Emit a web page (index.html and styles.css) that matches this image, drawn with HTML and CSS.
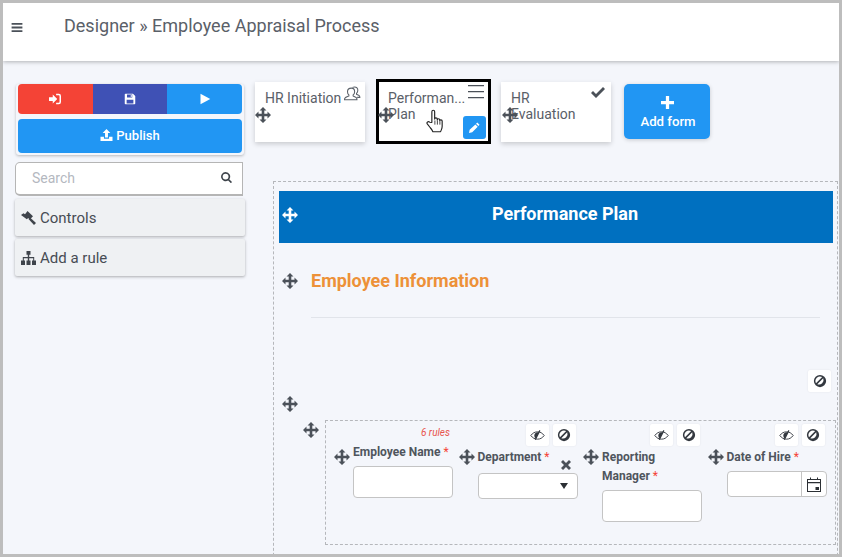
FILE: index.html
```html
<!DOCTYPE html>
<html lang="en">
<head>
<meta charset="utf-8">
<title>Designer</title>
<link rel="stylesheet" href="styles.css">
</head>
<body>
<svg class="sprite" aria-hidden="true">
  <symbol id="move" viewBox="0 0 16 16"><path d="M8 0l3.500 3.500H9.300v3.200h3.200V4.500L16 8l-3.500 3.500V9.300H9.300v3.200h2.200L8 16l-3.500-3.500h2.200V9.300H3.500v2.200L0 8l3.500-3.500v2.200h3.200V3.500H4.500z"/></symbol>
  <symbol id="ban" viewBox="0 0 16 16"><path fill-rule="evenodd" d="M8 1a7 7 0 1 1 0 14A7 7 0 0 1 8 1zm3.700 3.900L4.900 11.700A5.300 5.300 0 0 0 11.700 4.900zM10.500 3.400A5.300 5.300 0 0 0 3.400 10.500z"/></symbol>
  <symbol id="eye" viewBox="0 0 16 12"><path fill="none" stroke="#33383f" stroke-width="1" d="M.7 6C2.700 3.300 5 2 8 2s5.300 1.300 7.300 4C13.300 8.700 11 10 8 10S2.700 8.700.7 6z"/><path d="M4.500 6a3.500 3.500 0 0 1 5-3.200L6.200 9.300A3.500 3.500 0 0 1 4.500 6z"/><path d="M10 0l1.200.7-5 10.300-1.200-.7z"/></symbol>
</svg>
<div class="frame">
  <header class="topbar">
    <svg class="burger" viewBox="0 0 12 10"><path d="M0 0h12v2H0zM0 4h12v2H0zM0 8h12v2H0z"/></svg>
    <h1 class="title">Designer » Employee Appraisal Process</h1>
  </header>
  <div class="workspace">
    <aside class="sidebar">
      <div class="actions">
        <div class="action-row">
          <button class="action red"><svg class="ico" viewBox="0 0 16 16"><path d="M0 5.500h5V2l6 6-6 6v-3.500H0z"/><path d="M9.500 1H13a3 3 0 0 1 3 3v8a3 3 0 0 1-3 3H9.500v-2H13a1 1 0 0 0 1-1V4a1 1 0 0 0-1-1H9.500z"/></svg></button>
          <button class="action indigo"><svg class="ico" viewBox="0 0 16 16"><path fill-rule="evenodd" d="M1 2a1 1 0 0 1 1-1h10l3 3v10a1 1 0 0 1-1 1H2a1 1 0 0 1-1-1zm3 0v4h7V2zm5 .7h1.300v2.600H9zM3.500 9v5h9V9z"/></svg></button>
          <button class="action blue"><svg class="ico" viewBox="0 0 16 16"><path d="M2 1l13 7-13 7z"/></svg></button>
        </div>
        <button class="publish"><svg class="ico-pub" viewBox="0 0 14 14"><path d="M7 0l4.500 4.800H8.700V10H5.300V4.800H2.500z"/><path d="M0 9h4v2.400h6V9h4v5H0z"/></svg> Publish</button>
      </div>
      <label class="search">
        <span class="search-ph">Search</span>
        <svg class="search-ico" viewBox="0 0 12 12"><path fill-rule="evenodd" d="M5 0a5 5 0 0 1 4 8l3 3-1.200 1.200-3-3A5 5 0 1 1 5 0zm0 1.800a3.200 3.200 0 1 0 0 6.400 3.200 3.200 0 0 0 0-6.400z"/></svg>
      </label>
      <div class="panel">
        <svg class="panel-ico" viewBox="0 0 15 14"><path d="M6.500 0l5.500 5.200-3.200 3.200L7.200 7 5.800 8.300 0 4 2.500 2.200l1.500 1L5 2z"/><path d="M7.500 8L9 6.500l6 5.500-2 2z"/></svg>
        Controls
      </div>
      <div class="panel">
        <svg class="panel-ico" viewBox="0 0 15 14"><path d="M5.500 0h4v3.800H8.200v2.200h5V9.500H15V14h-4V9.500h1.200V7.300h-4v2.200H9.500V14h-4V9.500h1.300V7.300h-4v2.200H4V14H0V9.500h1.800V6h5V3.800H5.500z"/></svg>
        Add a rule
      </div>
    </aside>
    <main class="designer">
      <nav class="tabs">
        <div class="tab">
          <span class="tab-text">HR Initiation</span>
          <svg class="tab-user" viewBox="0 0 16 15" fill="none" stroke="currentColor" stroke-width="1"><path d="M7 1.500c2 0 3 1.400 3 3.300 0 1.400-.6 2.500-1.400 3.100v1c1.300.6 3 1 3.400 2.100.2.600.2 1.500.2 1.500H.5s0-.9.3-1.500c.6-1.100 2.500-1.600 3.800-2.100v-1C3.800 7.300 3.300 6.200 3.300 4.800c0-1.900 1.500-3.300 3.700-3.300z"/><path d="M8 .8c.5-.3 1.200-.3 1.800-.3 2 0 3.200 1.300 3.200 3.100 0 1.300-.5 2.200-1.200 2.800v.9c1.200.5 2.700 1 3 2 .1.300.1.900.1.900h-2.500"/></svg>
          <svg class="move tab-move"><use href="#move"/></svg>
        </div>
        <div class="tab tab-active">
          <span class="tab-text">Performan...<br>Plan</span>
          <svg class="tab-menu" viewBox="0 0 16 14"><path d="M0 0h16v1.200H0zM0 6h16v1.200H0zM0 12h16v1.200H0z"/></svg>
          <button class="tab-edit"><svg viewBox="0 0 12 12"><path d="M9 .5l2.500 2.500-1.300 1.300-2.500-2.500zM7 2.800l2.500 2.500L3.500 11.300 0 12l.7-3.500z"/></svg></button>
          <svg class="tab-cursor" viewBox="0 0 18 24"><path fill="#fff" stroke="#222" stroke-width="1.100" stroke-linejoin="round" d="M5.500 13V2.700c0-2 2.700-2 2.700 0v7c0-1.600 2.500-1.600 2.500 0v.8c0-1.500 2.400-1.500 2.400 0v.9c0-1.400 2.300-1.400 2.300.2v5c0 2.500-1 3.500-1.500 5.200H6.500c-.6-1.700-1.300-2.500-2.500-3.800L1.100 14.300c-1-1.500 1-3 2.300-1.600z"/><path stroke="#222" stroke-width=".8" d="M8.400 11v4M10.800 11v4M13.200 12v3"/></svg>
          <svg class="move tab-move"><use href="#move"/></svg>
        </div>
        <div class="tab">
          <span class="tab-text">HR<br>Evaluation</span>
          <svg class="tab-check" viewBox="0 0 14 11"><path d="M5 11L0 6l2-2 3 3 7-7 2 2z"/></svg>
          <svg class="move tab-move"><use href="#move"/></svg>
        </div>
        <button class="add-form">
          <svg class="add-plus" viewBox="0 0 12 12"><path d="M4.500 0h3v4.500H12v3H7.500V12h-3V7.500H0v-3h4.500z"/></svg>
          <span class="add-label">Add form</span>
        </button>
      </nav>
      <section class="canvas">
        <div class="banner">
          <svg class="move banner-move"><use href="#move"/></svg>
          <h2 class="banner-title">Performance Plan</h2>
        </div>
        <div class="section-head">
          <svg class="move head-move"><use href="#move"/></svg>
          <h3 class="section-title">Employee Information</h3>
        </div>
        <hr class="rule">
        <div class="row-tools"><button class="tool"><svg class="tool-ban"><use href="#ban"/></svg></button></div>
        <div class="row">
          <svg class="move row-move"><use href="#move"/></svg>
          <svg class="move group-move"><use href="#move"/></svg>
          <div class="group">
            <div class="field field-name">
              <svg class="move field-move"><use href="#move"/></svg>
              <div class="rules-count">6 rules</div>
              <label class="field-label">Employee Name <span class="req">*</span></label>
              <div class="input"></div>
            </div>
            <div class="field">
              <svg class="move field-move"><use href="#move"/></svg>
              <div class="tools"><button class="tool"><svg class="tool-eye"><use href="#eye"/></svg></button><button class="tool"><svg class="tool-ban"><use href="#ban"/></svg></button></div>
              <label class="field-label">Department <span class="req">*</span></label>
              <svg class="field-x" viewBox="0 0 10 10"><path d="M2 0l3 3 3-3 2 2-3 3 3 3-2 2-3-3-3 3-2-2 3-3-3-3z"/></svg>
              <div class="input select"><svg class="caret" viewBox="0 0 8 6"><path d="M0 0h8L4 6z"/></svg></div>
            </div>
            <div class="field">
              <svg class="move field-move"><use href="#move"/></svg>
              <div class="tools"><button class="tool"><svg class="tool-eye"><use href="#eye"/></svg></button><button class="tool"><svg class="tool-ban"><use href="#ban"/></svg></button></div>
              <label class="field-label">Reporting<br>Manager <span class="req">*</span></label>
              <div class="input"></div>
            </div>
            <div class="field">
              <svg class="move field-move"><use href="#move"/></svg>
              <div class="tools"><button class="tool"><svg class="tool-eye"><use href="#eye"/></svg></button><button class="tool"><svg class="tool-ban"><use href="#ban"/></svg></button></div>
              <label class="field-label">Date of Hire <span class="req">*</span></label>
              <div class="input date"><span class="date-btn"><svg viewBox="0 0 14 15" width="14" height="15"><path fill-rule="evenodd" d="M0 2h3V.500h1V2h6V.500h1V2h3v13H0zm1 1v2h12V3zm0 3.200V14h12V6.200zM8.500 10H12v3H8.500z"/></svg></span></div>
            </div>
          </div>
        </div>
      </section>
    </main>
  </div>
</div>
</body>
</html>
```

FILE: styles.css
```css
* { box-sizing: border-box; }
html, body { margin: 0; height: 100%; }
body {
  background: #bdbdbd;
  font-family: Roboto, "Liberation Sans", sans-serif;
  color: #4b5159;
  overflow: hidden;
}
button { font-family: inherit; border: 0; padding: 0; }
.sprite { display: none; }
.move { width: 16px; height: 16px; fill: #4b5159; position: absolute; }

.frame {
  margin: 3px 3px 3px 3px;
  width: 836px;
  height: 551px;
  background: #f4f6fb;
  overflow: hidden;
  display: flex;
  flex-direction: column;
}
.topbar {
  flex: none;
  height: 58px;
  background: #fff;
  box-shadow: 0 1px 4px rgba(0,0,0,.28);
  position: relative;
  display: flex;
  align-items: flex-start;
}
.burger { width: 12px; height: 9px; fill: #4b5159; margin: 20px 0 0 8px; }
.title {
  margin: 12px 0 0 41px;
  font-size: 18px;
  line-height: 22px;
  font-weight: 400;
  color: #5a6068;
}
.workspace { flex: 1; display: flex; min-height: 0; padding-left: 12px; }

.sidebar { flex: none; width: 230px; padding-top: 23px; }
.actions {
  margin: 0 1px;
  padding: 0 2px 2px;
  box-shadow: 0 1px 3px rgba(0,0,0,.25);
  border-radius: 3px;
}
.action-row { display: flex; height: 30px; border-radius: 4px; overflow: hidden; }
.action { flex: 1; display: flex; align-items: center; justify-content: center; }
.red { background: #f44336; }
.indigo { background: #3f51b5; }
.blue { background: #2196f3; }
.ico { width: 12px; height: 12px; fill: #fff; }
.publish {
  display: flex;
  align-items: center;
  justify-content: center;
  gap: 3px;
  width: 100%;
  height: 34px;
  margin-top: 5px;
  padding-bottom: 2px;
  background: #2196f3;
  border-radius: 4px;
  color: #fff;
  font-size: 13px;
  font-weight: 500;
}
.ico-pub { width: 13px; height: 12px; fill: #fff; }
.search {
  display: flex;
  align-items: center;
  justify-content: space-between;
  height: 34px;
  margin: 7px 2px 0 0;
  padding: 0 10px 2px 16px;
  background: #fff;
  border: 1px solid #b5b5b5;
  border-bottom-width: 2px;
  border-radius: 5px 0 0 5px;
}
.search-ph { font-size: 14px; color: #b4b8bf; }
.search-ico { width: 11px; height: 11px; fill: #3d434a; }
.panel {
  display: flex;
  align-items: center;
  gap: 4px;
  height: 37px;
  margin-bottom: 3px;
  padding-left: 6px;
  background: #eff1f3;
  box-shadow: 0 1px 3px rgba(0,0,0,.3);
  border-radius: 2px;
  font-size: 15px;
  color: #474c54;
}
.search + .panel { margin-top: 3px; }
.panel-ico { width: 15px; height: 14px; fill: #3f444b; }

.designer { flex: 1; min-width: 0; padding: 18px 0 0 10px; }
.tabs { display: flex; align-items: center; height: 65px; }
.tab {
  position: relative;
  width: 110px;
  height: 60px;
  padding: 8px 10px;
  background: #fff;
  box-shadow: 0 2px 5px rgba(0,0,0,.18);
  font-size: 14px;
  line-height: 16px;
  color: #5a6068;
}
.tab + .tab { margin-left: 11px; }
.tab-text { display: block; }
.tab-move { left: 0; top: 25px; }
.tab-user { position: absolute; right: 4px; top: 4px; width: 17px; height: 17px; color: #5a6068; }
.tab-active {
  width: 115px;
  height: 65px;
  padding: 8px 9px;
  border: 3px solid #000;
  box-shadow: none;
}
.tab-active + .tab { margin-left: 10px; }
.tab-active .tab-move { left: -1px; top: 25px; }
.tab-active + .tab .tab-move { left: 1px; }
.tab-menu { position: absolute; right: 4px; top: 3px; width: 16px; height: 14px; fill: #4b5159; }
.tab-edit {
  position: absolute;
  right: 2px;
  bottom: 2px;
  width: 23px;
  height: 23px;
  border-radius: 3px;
  background: #2196f3;
  display: flex;
  align-items: center;
  justify-content: center;
}
.tab-edit svg { width: 11px; height: 11px; fill: #fff; }
.tab-cursor { position: absolute; left: 47px; top: 27px; width: 19px; height: 25px; }
.tab-check { position: absolute; right: 6px; top: 5px; width: 14px; height: 11px; fill: #4b5159; }
.add-form {
  width: 86px;
  height: 55px;
  margin-left: 13px;
  background: #2196f3;
  border-radius: 5px;
  color: #fff;
  font-size: 13.200px;
  font-weight: 500;
  display: flex;
  flex-direction: column;
  align-items: center;
  gap: 5px;
  padding-top: 12px;
  box-shadow: 0 1px 4px rgba(0,0,0,.18);
}
.add-label { margin-left: 2px; }
.add-plus { width: 13px; height: 13px; fill: #fff; }

.canvas {
  width: 565px;
  height: 400px;
  margin: 37px 0 0 18px;
  padding: 9px 0 0 5px;
  border: 1px dashed #b5b7bb;
  border-bottom: 0;
}
.banner {
  position: relative;
  width: 554px;
  height: 52px;
  padding: 0 0 8px 18px;
  background: #0070c0;
  display: flex;
  align-items: center;
  justify-content: center;
}
.banner-move { left: 3px; top: 16px; fill: #fff; }
.banner-title { margin: 0; font-size: 18px; font-weight: 700; color: #fff; }
.section-head { position: relative; height: 74px; padding: 26px 0 0 32px; }
.head-move { left: 3px; top: 30px; }
.section-title { margin: 0; font-size: 18px; line-height: 24px; font-weight: 700; color: #ed9138; }
.rule { margin: 0 0 0 32px; width: 509px; border: 0; border-top: 1px solid #e1e4ea; }
.row-tools { display: flex; justify-content: flex-end; padding: 52px 6px 0 0; }
.tool {
  display: flex;
  align-items: center;
  justify-content: center;
  width: 23px;
  height: 22px;
  background: #fff;
  border-radius: 2px;
  box-shadow: 0 0 2px rgba(0,0,0,.08);
}
.tool-ban { width: 14px; height: 14px; fill: #33383f; }
.tool-eye { width: 15px; height: 11px; fill: #33383f; }
.row { position: relative; margin-top: 28px; padding-left: 46px; }
.row-move { left: 3px; top: -24px; }
.group-move { left: 24px; top: 2px; }
.group {
  width: 511px;
  height: 125px;
  padding: 0 0 0 27px;
  border: 1px dashed #b5b7bb;
  display: grid;
  grid-template-columns: repeat(4, 100px);
  column-gap: 24.500px;
  align-items: start;
}
.field { position: relative; padding-top: 3px; }
.field-move { left: -19px; top: 28px; }
.rules-count {
  height: 19px;
  padding: 3px 3px 0 0;
  text-align: right;
  font-size: 10px;
  line-height: 12px;
  font-style: italic;
  color: #e8554e;
}
.tools { display: flex; justify-content: flex-end; gap: 4px; height: 22px; padding-right: 2px; margin-bottom: 2px; }
.field-label {
  display: block;
  font-size: 12px;
  line-height: 19px;
  font-weight: 700;
  color: #4f555d;
  margin-bottom: 4px;
}
.req { color: #f44336; font-weight: 400; }
.input {
  height: 32px;
  background: #fff;
  border: 1px solid #c4c4c4;
  border-radius: 4px;
}
.select {
  height: 26px;
  margin-top: 6px;
  display: flex;
  align-items: center;
  justify-content: flex-end;
  padding-right: 9px;
}
.caret { width: 8px; height: 6px; fill: #2b2f34; }
.field-x { position: absolute; right: 7px; top: 39px; width: 10px; height: 10px; fill: #4b5159; }
.date { height: 26px; margin-top: 2px; display: flex; justify-content: flex-end; }
.date-btn {
  width: 25px;
  display: flex;
  align-items: center;
  justify-content: center;
  border-left: 1px solid #c4c4c4;
  fill: #2b2f34;
}
```
